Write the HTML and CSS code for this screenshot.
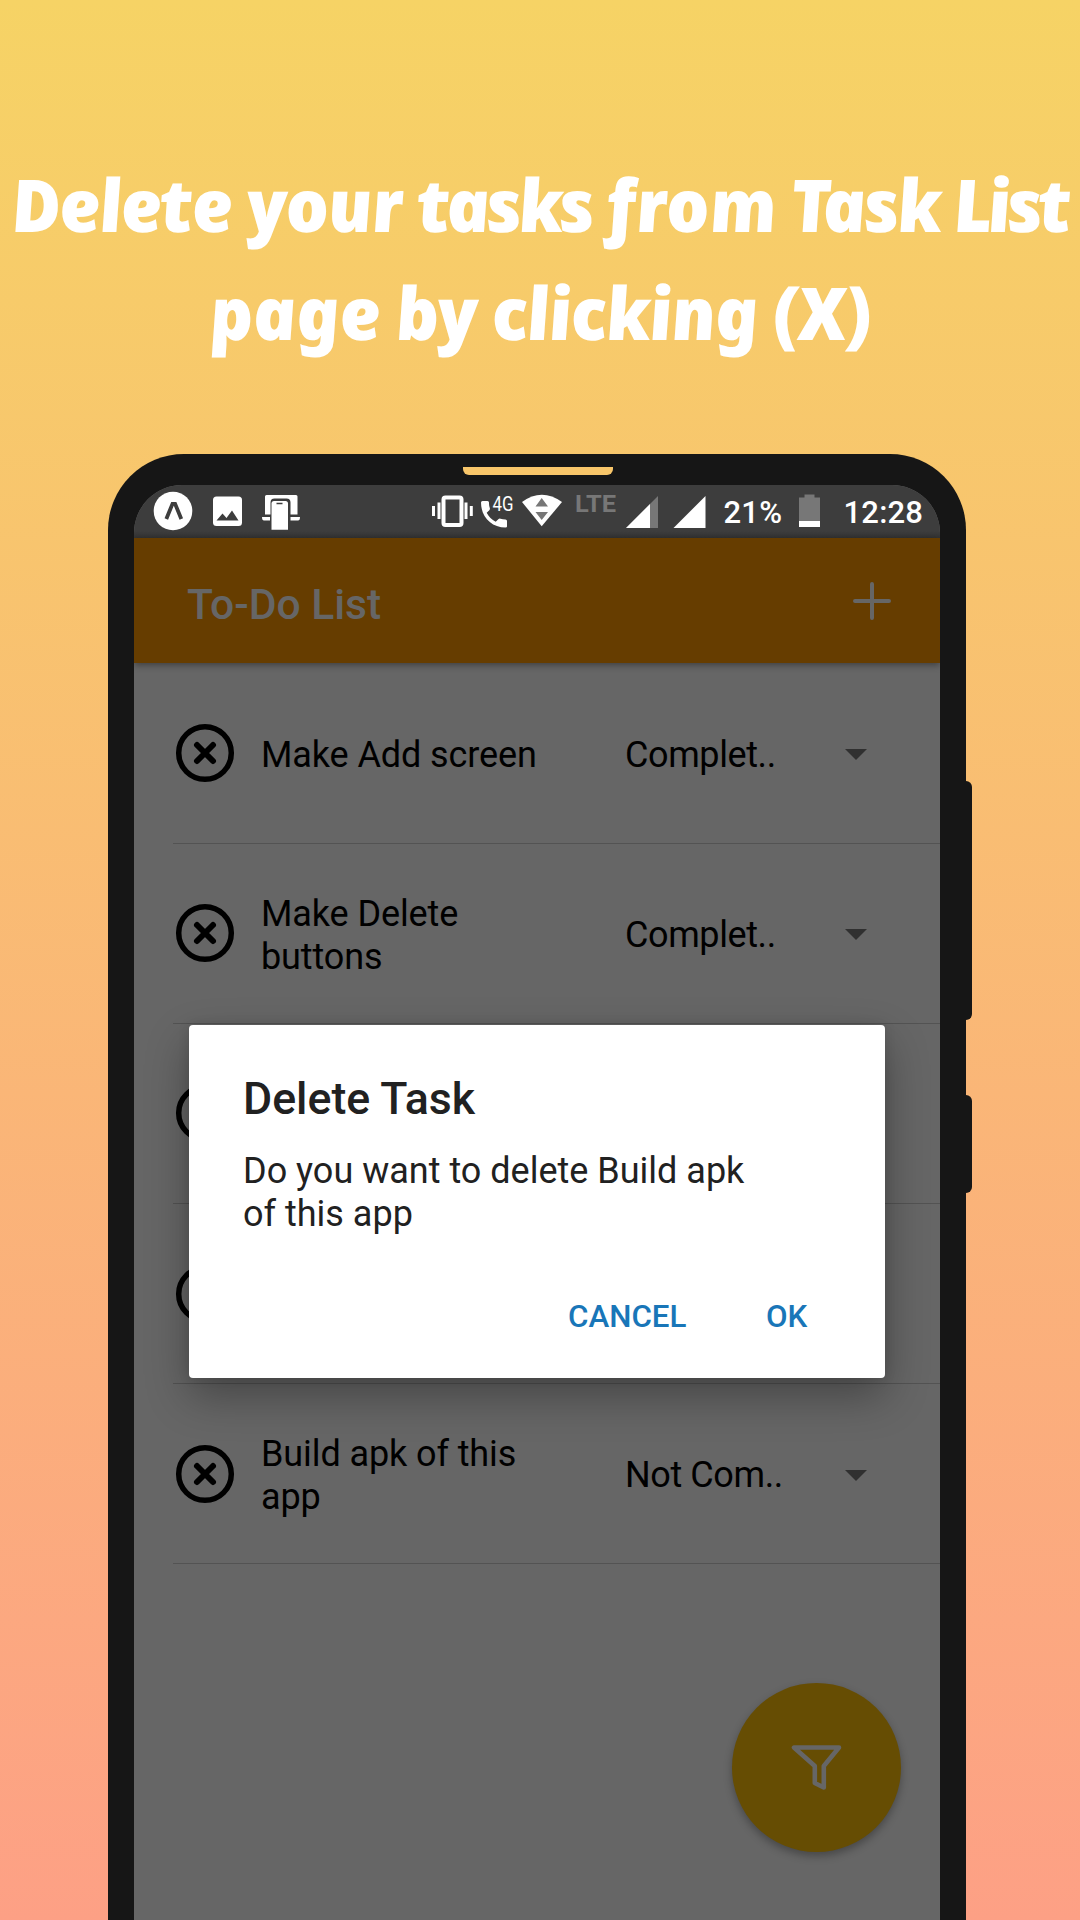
FILE: index.html
```html
<!DOCTYPE html>
<html lang="en">
<head>
<meta charset="utf-8">
<title>To-Do List</title>
<link rel="stylesheet" href="styles.css">
</head>
<body>
<main class="page">
  <h1 class="headline">
    <span class="line"><span class="w1">Delete</span><span class="w2">your</span><span class="w3">tasks</span><span class="w4">from</span><span class="w5">Task</span><span class="w6">List</span></span>
    <span class="line second"><span class="w7">page</span><span class="w8">by</span><span class="w9">clicking</span><span class="w10">(X)</span></span>
  </h1>
  <section class="phone">
    <i class="speaker"></i><i class="side volume"></i><i class="side power"></i>
    <div class="screen">
      <div class="status">
        <svg width="66" height="53" viewBox="134 485 66 53"><circle cx="173" cy="511" r="19.3" fill="#fff"/><path d="M166.300 519l6.200-15.200h2.600l6.200 15.200" fill="none" stroke="#3d3d3d" stroke-width="3.800"/></svg>
        <svg width="50" height="53" viewBox="200 485 50 53"><rect x="213" y="496.500" width="29" height="29.500" rx="3.500" fill="#fff"/><path d="M216.500 520.500l6-7 4 4.500 5.500-7.500 6.500 10z" fill="#3d3d3d"/></svg>
        <svg width="170" height="53" viewBox="250 485 170 53"><path d="M265 496.500q0-1.500 1.500-1.500h29.500q1.500 0 1.500 1.500v18h-7v-12q0-4-4-4h-12q-4 0-4 4v12h-5.500zM262 517h8v3.500h-6q-2 0-2-3.500zM290.500 517h9.500q0 3.500-2 3.500h-7.500z" fill="#fff"/><path d="M271.500 503.500q0-2.500 2.500-2.500h11.500q2.500 0 2.500 2.500v26.300h-16.500z" fill="#fff"/><path d="M276.500 503.500h6" stroke="#3d3d3d" stroke-width="1.500"/></svg>
        <svg width="58" height="53" viewBox="420 485 58 53"><rect x="443.500" y="497.500" width="18" height="27.500" rx="2" fill="none" stroke="#fff" stroke-width="4"/><path d="M433.500 506v10M439 502.500v16.500M466 502.500v16.500M471.300 506v10" stroke="#fff" stroke-width="3"/></svg>
        <svg width="40" height="53" viewBox="478 485 40 53"><path d="M482.500 501h5q1.500 0 1.500 1.500c0 2.500.3 4 .8 5.500q.4 1.300-.5 2.200l-2.600 2.600c2 4 5 7 9 9l2.600-2.600q1-.9 2.200-.5c1.500.5 3.200.8 5 .8q1.500 0 1.500 1.500v5.500q0 1-1.500 1c-14 0-24.500-10.500-24.500-25q0-1.500 1.500-1.500z" fill="#fff"/><text x="492.500" y="511" class="net" textLength="21" lengthAdjust="spacingAndGlyphs">4G</text></svg>
        <svg width="50" height="53" viewBox="518 485 50 53"><path d="M522 502q19.700-14.500 40 0l-20.300 24.300z" fill="#fff"/><path d="M535.500 506.500l6.200-8.500 6.300 8.500zM535.500 512h12.500l-6.300 8z" fill="#777"/></svg>
        <svg width="52" height="53" viewBox="568 485 52 53"><text x="575" y="511.500" class="lte" textLength="41" lengthAdjust="spacingAndGlyphs">LTE</text></svg>
        <svg width="46" height="53" viewBox="620 485 46 53"><path d="M658 496v32h-32z" fill="#777"/><path d="M650 504v24h-24z" fill="#fff"/></svg>
        <svg width="58" height="53" viewBox="666 485 58 53"><path d="M705.500 496v32h-32z" fill="#fff"/></svg>
        <span class="pct">21%</span>
        <svg width="46" height="53" viewBox="796 485 46 53"><path d="M804.500 494.500h10v3h5.500v29.500h-21v-29.500h5.500z" fill="#777"/><path d="M799 521h21v6h-21z" fill="#fff"/></svg>
        <span class="time">12:28</span>
      </div>
      <header class="appbar"><span class="apptitle">To-Do List</span>
        <svg width="38" height="38" viewBox="-19 -19 38 38"><path d="M-17 0h34M0-17v34" stroke="#666" stroke-width="4" stroke-linecap="round"/></svg>
      </header>
      <ul class="tasks">
        <li><svg class="x" viewBox="-30 -30 60 60"><circle r="26.300"/><path d="M-8-8l16 16M8-8l-16 16"/></svg><span class="name">Make Add screen</span><span class="state">Complet..</span><i class="caret"></i></li>
        <li><svg class="x" viewBox="-30 -30 60 60"><circle r="26.300"/><path d="M-8-8l16 16M8-8l-16 16"/></svg><span class="name">Make Delete buttons</span><span class="state">Complet..</span><i class="caret"></i></li>
        <li><svg class="x" viewBox="-30 -30 60 60"><circle r="26.300"/></svg></li>
        <li><svg class="x" viewBox="-30 -30 60 60"><circle r="26.300"/></svg></li>
        <li><svg class="x" viewBox="-30 -30 60 60"><circle r="26.300"/><path d="M-8-8l16 16M8-8l-16 16"/></svg><span class="name">Build apk of this app</span><span class="state">Not Com..</span><i class="caret"></i></li>
      </ul>
      <div class="fab"><svg width="54" height="50" viewBox="0 0 54 50"><path d="M4.500 4.500h45L34.300 23v21.500l-9-4.500V23z" transform="translate(.5 1)" fill="none" stroke="#666" stroke-width="4.600" stroke-linejoin="round"/></svg></div>
    </div>
    <div class="dialog">
      <h2>Delete Task</h2>
      <p>Do you want to delete Build apk<br>of this app</p>
      <div class="actions"><span class="cancel">CANCEL</span><span class="ok">OK</span></div>
    </div>
  </section>
</main>
</body>
</html>
```
FILE: styles.css
```css
* { box-sizing: border-box; }
body { margin: 0; font-family: Roboto, sans-serif; }
.page { width: 1080px; height: 1920px; overflow: hidden; background: linear-gradient(#f6d365, #fda085); display: flex; flex-direction: column; }
.headline { margin: 0; height: 454px; flex: none; padding: 149px 0 0 14px; color: #fff; font: italic 900 73px/110.400px "Noto Sans", sans-serif; white-space: nowrap; }
.line { display: flex; transform: skewX(8deg); transform-origin: 0 74%; }
.second { padding-left: 198px; margin-top: -2px; }
.line span { display: block; flex: none; }
.w1 { width: 236px; letter-spacing: -2.300px; }
.w2 { width: 170px; letter-spacing: -1.800px; }
.w3 { width: 189px; letter-spacing: -4.500px; }
.w4 { width: 185px; letter-spacing: -.5px; }
.w5 { width: 162px; letter-spacing: -3.300px; }
.w6 { letter-spacing: -4.500px; }
.w7 { width: 186px; letter-spacing: -1px; }
.w8 { width: 96px; }
.w9 { width: 281px; letter-spacing: -1.700px; }
.w10 { letter-spacing: -1.500px; }
.phone { position: relative; flex: none; width: 857.500px; height: 1500px; margin-left: 108px; padding: 30.500px 25.500px 0; background: #161616; border-radius: 76px 76px 0 0; }
.speaker { position: absolute; left: 355px; top: 13px; width: 150px; height: 8px; border-radius: 0 0 6px 6px; background: #f8c66a; }
.side { position: absolute; right: -6.500px; width: 12px; border-radius: 0 6px 6px 0; background: #161616; }
.volume { top: 327px; height: 239px; }
.power { top: 641px; height: 98px; }
.screen { position: relative; height: 1470px; border-radius: 48px 48px 0 0; overflow: hidden; background: #666; }
.status { height: 53.500px; display: flex; padding-top: .5px; background: linear-gradient(#3d3d3d 46px, #343434); color: #fff; font: 500 31px/53px Roboto, sans-serif; white-space: nowrap; }
.status svg { flex: none; }
.pct { width: 72px; flex: none; padding-top: 1px; letter-spacing: .2px; }
.time { flex: none; padding: 1px 0 0 2px; letter-spacing: .2px; }
.net { font: 20px Roboto, sans-serif; fill: #fff; }
.lte { font: 700 24px Roboto, sans-serif; fill: #777; }
.appbar { position: relative; height: 125px; padding: 0 49.500px 0 53.500px; display: flex; align-items: center; justify-content: space-between; background: #663d00; box-shadow: 0 2px 7px rgba(0,0,0,.4); color: #666; font: 500 42.600px/50px Roboto, sans-serif; }
.apptitle { padding-top: 6px; }
.tasks { list-style: none; margin: 0; padding: .5px 0 0 39.500px; }
.tasks li { height: 180.200px; border-bottom: 1px solid #535353; display: flex; align-items: center; color: #000; font-size: 36px; line-height: 43px; }
.x { flex: none; width: 60px; height: 60px; margin-left: 2px; fill: none; stroke: #000; stroke-width: 5.500px; stroke-linecap: round; }
.x path { stroke-width: 6px; }
.name { flex: none; width: 300px; margin-left: 26px; padding-top: 5px; letter-spacing: -.1px; }
.state { flex: none; width: 220px; margin-left: 64px; padding-top: 4px; letter-spacing: -.4px; }
.caret { border: 11px solid transparent; border-top-color: #303030; border-bottom: 0; margin-top: 3px; }
.fab { position: absolute; left: 598px; top: 1198px; width: 169px; height: 169px; border-radius: 50%; background: #664d03; box-shadow: 0 4px 8px rgba(0,0,0,.3); display: flex; align-items: center; justify-content: center; }
.dialog { position: absolute; left: 81px; top: 571.400px; width: 696px; height: 353px; padding: 46px 54px; border-radius: 4px; background: #fff; box-shadow: 0 18px 44px rgba(0,0,0,.32), 0 0 12px rgba(0,0,0,.12); color: #212121; }
.dialog h2 { margin: 0; font: 500 44.700px/56px Roboto, sans-serif; }
.dialog p { margin: 23px 0 0; font-size: 36px; line-height: 43px; white-space: nowrap; }
.actions { display: flex; margin: 60px 0 0 325px; color: #1976b8; font: 500 31.300px/42px Roboto, sans-serif; }
.cancel { width: 198px; }
```
